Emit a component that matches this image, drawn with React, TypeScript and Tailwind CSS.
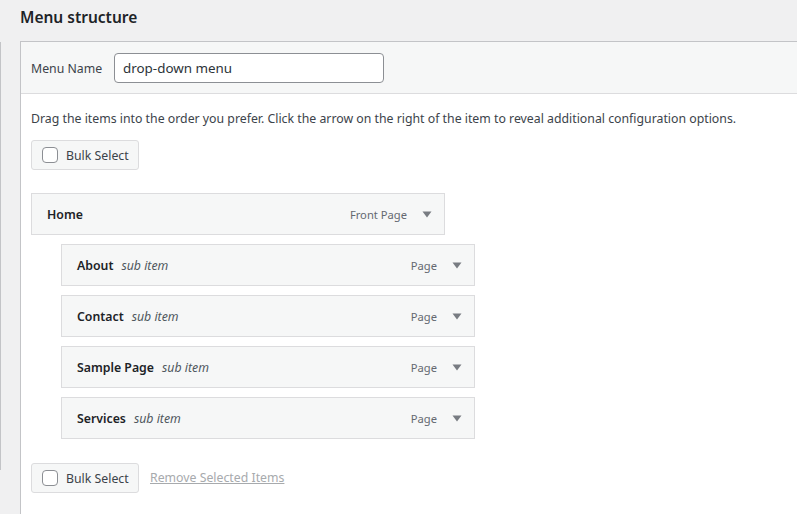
import React from "react";

const font = { fontFamily: '"Noto Sans", "Open Sans", sans-serif' };

function Arrow() {
  return (
    <svg width="10" height="7" viewBox="0 0 10 7" className="shrink-0">
      <path d="M0.5 0.5 L9.5 0.5 L5 6.5 Z" fill="#787c82" />
    </svg>
  );
}

function BulkSelect() {
  return (
    <div className="flex items-center h-[30px] w-[108px] pl-[10px] gap-[8px] border border-[#dcdcde] rounded-[3px] bg-[#f6f7f7]">
      <span className="w-[16px] h-[16px] rounded-[4px] border border-[#8c8f94] bg-white shrink-0" />
      <span className="text-[12.3px] leading-[20px] pt-px text-[#3c434a]">Bulk Select</span>
    </div>
  );
}

function Item({ title, sub, type, indent }: { title: string; sub?: string; type: string; indent?: boolean }) {
  return (
    <div className={`flex items-center h-[42px] w-[414px] border border-[#dcdcde] bg-[#f6f7f7] pl-[15px] pr-[12px] mt-[9px] first:mt-0 ${indent ? "ml-[30px]" : ""}`}>
      <span className="text-[12.3px] pt-[3px] font-semibold text-[#1d2327]">{title}</span>
      {sub && <span className="ml-[8px] pt-[3px] text-[12.3px] italic text-[#50575e]">{sub}</span>}
      <span className="ml-auto pt-[3px] text-[11.2px] text-[#646970]">{type}</span>
      <span className="ml-[15px]"><Arrow /></span>
    </div>
  );
}

export default function App() {
  return (
    <div className="flex w-[797px] h-[514px] overflow-hidden bg-[#f0f0f1]" style={font}>
      <div className="w-px mt-[42px] h-[428px] bg-[#c3c4c7] shrink-0" />
      <div className="ml-[19px] flex-1 min-w-0">
        <h2 className="h-[41px] pt-[5px] text-[15.5px] font-semibold text-[#1d2327] leading-[24px]">Menu structure</h2>
        <div className="-mr-10 border-l border-t border-[#c3c4c7] bg-white h-[600px]">
          <div className="flex items-center h-[52px] bg-[#f6f7f7] border-b border-[#dcdcde] pl-[10px]">
            <span className="w-[83px] pt-[3px] text-[12.3px] text-[#3c434a]">Menu Name</span>
            <div className="flex items-center w-[270px] h-[30px] border border-[#8c8f94] rounded-[4px] bg-white pl-[8px] pt-[2px] text-[13.4px] text-[#2c3338]">
              drop-down menu
            </div>
          </div>
          <div className="pl-[10px]">
            <p className="pt-[15px] h-[46px] text-[12.3px] text-[#3c434a] leading-[20px]">
              Drag the items into the order you prefer. Click the arrow on the right of the item to reveal additional configuration options.
            </p>
            <BulkSelect />
            <div className="mt-[23px] flex flex-col">
              <Item title="Home" type="Front Page" />
              <Item title="About" sub="sub item" type="Page" indent />
              <Item title="Contact" sub="sub item" type="Page" indent />
              <Item title="Sample Page" sub="sub item" type="Page" indent />
              <Item title="Services" sub="sub item" type="Page" indent />
            </div>
            <div className="mt-[24px] flex items-center">
              <BulkSelect />
              <span className="ml-[11px] pt-px text-[12.3px] text-[#a7aaad] underline">Remove Selected Items</span>
            </div>
          </div>
        </div>
      </div>
    </div>
  );
}
